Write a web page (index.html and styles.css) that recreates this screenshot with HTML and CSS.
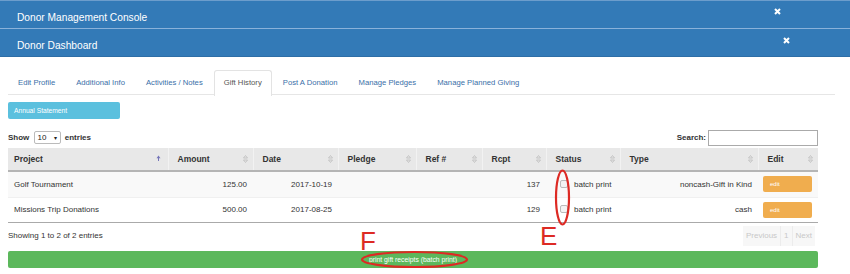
FILE: index.html
```
<!DOCTYPE html>
<html>
<head>
    <meta http-equiv="Content-Type" content="text/html; charset=utf-8">
    <title>Donor Dashboard</title>
    <link rel="stylesheet" href="styles.css">
</head>
<body>
<!-- 顶部标题栏 -->
<div class="bar bar-top">
    <span class="bar-title">Donor Management Console</span>
    <svg class="close" width="7" height="7" viewBox="0 0 7 7"><path d="M1 1L6 6M6 1L1 6" stroke="#fff" stroke-width="2"/></svg>
</div>
<div class="bar bar-sub">
    <span class="bar-title">Donor Dashboard</span>
    <svg class="close" width="7" height="7" viewBox="0 0 7 7"><path d="M1 1L6 6M6 1L1 6" stroke="#fff" stroke-width="2"/></svg>
</div>

<div class="content">
    <!-- tabs -->
    <ul class="tabs">
        <li>Edit Profile</li>
        <li>Additional Info</li>
        <li>Activities / Notes</li>
        <li class="active">Gift History</li>
        <li>Post A Donation</li>
        <li>Manage Pledges</li>
        <li>Manage Planned Giving</li>
    </ul>

    <div class="btn-info">Annual Statement</div>

    <div class="table-wrap">
        <div class="tools">
            <label class="len">Show <span class="select">10 <i>&#9662;</i></span> entries</label>
            <label class="search">Search: <span class="input"></span></label>
        </div>

        <table class="grid">
            <thead>
            <tr>
                <th class="c-project sorted">Project</th>
                <th class="c-amount">Amount</th>
                <th class="c-date">Date</th>
                <th class="c-pledge">Pledge</th>
                <th class="c-ref">Ref #</th>
                <th class="c-rcpt">Rcpt</th>
                <th class="c-status">Status</th>
                <th class="c-type">Type</th>
                <th class="c-edit">Edit</th>
            </tr>
            </thead>
            <tbody>
            <tr class="odd">
                <td>Golf Tournament</td>
                <td class="r">125.00</td>
                <td class="r">2017-10-19</td>
                <td></td>
                <td></td>
                <td class="r">137</td>
                <td><span class="chk"></span>batch print</td>
                <td class="r">noncash-Gift in Kind</td>
                <td><span class="btn-edit">edit</span></td>
            </tr>
            <tr>
                <td>Missions Trip Donations</td>
                <td class="r">500.00</td>
                <td class="r">2017-08-25</td>
                <td></td>
                <td></td>
                <td class="r">129</td>
                <td><span class="chk"></span>batch print</td>
                <td class="r">cash</td>
                <td><span class="btn-edit">edit</span></td>
            </tr>
            </tbody>
        </table>

        <div class="foot">
            <span>Showing 1 to 2 of 2 entries</span>
            <div class="pager">
                <span>Previous</span><span>1</span><span>Next</span>
            </div>
        </div>

        <div class="btn-print">print gift receipts (batch print)</div>
    </div>
</div>

<!-- 标注 E / F -->
<svg class="marks" width="850" height="274" viewBox="0 0 850 274">
    <ellipse cx="562.5" cy="197.5" rx="6.5" ry="27" fill="none" stroke="#dd2a24" stroke-width="2.2"/>
    <ellipse cx="414.5" cy="259.5" rx="52.5" ry="7.5" fill="none" stroke="#dd2a24" stroke-width="2.2"/>
    <text x="540" y="245" class="mark-letter">E</text>
    <text x="360" y="250" class="mark-letter">F</text>
</svg>
</body>
</html>
```

FILE: styles.css
```
body {
    margin: 0;
    font-family: "Liberation Sans", Arial, sans-serif;
    font-size: 8px;
    color: #333;
    background: #fff;
    position: relative;
    width: 850px;
    height: 274px;
    overflow: hidden;
}

/* 标题栏 */
.bar {
    display: flex;
    align-items: center;
    justify-content: space-between;
    height: 27px;
    padding-left: 17px;
    background: #337ab7;
    color: #fff;
    font-size: 10.2px;
}
.bar-top {
    border-top: 1px solid #6c9dcc;
    padding-right: 69px;
}
.bar-top .close {
    margin-top: -6px;
}
.bar-sub {
    border-top: 1px solid #8ab2da;
    border-bottom: 1px solid #2e6ea6;
    padding-right: 60px;
}
.bar-sub .close {
    margin-top: -5px;
}
.bar-title {
    margin-top: 5px;
}

.content {
    padding: 13px 15px 0 8px;
}

/* tabs */
.tabs {
    display: flex;
    margin: 0;
    padding: 0;
    list-style: none;
    border-bottom: 1px solid #e6e6e6;
    height: 24px;
    font-size: 7.7px;
}
.tabs li {
    padding: 0 9px;
    margin-right: 1px;
    line-height: 24px;
    color: #3a6fa8;
    border: 1px solid transparent;
    border-bottom: none;
    border-radius: 3px 3px 0 0;
}
.tabs li.active {
    color: #555;
    border-color: #e3e3e3;
    background: #fff;
    height: 25px;
}

.btn-info {
    width: 106px;
    height: 17px;
    line-height: 17px;
    padding-left: 6px;
    margin-top: 7px;
    background: #5bc0de;
    border-radius: 2px;
    color: #fff;
    font-size: 6.7px;
}

.table-wrap {
    width: 810px;
}

.tools {
    display: flex;
    justify-content: space-between;
    align-items: center;
    height: 17px;
    margin-top: 10px;
    font-weight: bold;
}
.select {
    display: inline-flex;
    align-items: center;
    justify-content: space-between;
    width: 19px;
    height: 11px;
    padding: 0 3px;
    margin: 0 2px;
    border: 1px solid #bbb;
    border-radius: 2px;
    font-weight: normal;
    color: #222;
}
.select i {
    font-style: normal;
    font-size: 6px;
}
.search {
    display: flex;
    align-items: center;
}
.input {
    display: inline-block;
    width: 108px;
    height: 14px;
    margin-left: 2px;
    border: 1px solid #aaa;
}

/* 表格 */
.grid {
    width: 810px;
    margin-top: 2px;
    border-collapse: collapse;
    table-layout: fixed;
}
.grid th {
    box-sizing: border-box;
    height: 23px;
    padding: 0 0 0 9px;
    text-align: left;
    font-size: 8.5px;
    background: #e8e8e8 url("data:image/svg+xml,%3Csvg xmlns='http://www.w3.org/2000/svg' width='5' height='8'%3E%3Cpath d='M2.5 0.5L4.5 3H0.5Z M2.5 7.5L4.5 5H0.5Z' fill='none' stroke='%23bdbdbd' stroke-width='0.8'/%3E%3C/svg%3E") no-repeat right 5px center;
    border-left: 1px solid #f2f2f2;
    border-bottom: 2px solid #b5b5b5;
}
.grid th:first-child {
    padding-left: 6px;
    border-left: none;
}
.grid th.sorted {
    background-image: url("data:image/svg+xml,%3Csvg xmlns='http://www.w3.org/2000/svg' width='5' height='8'%3E%3Cpath d='M2.5 0.5L4.5 3.2H0.5Z' fill='%237575b8'/%3E%3Cpath d='M2.5 3V6' stroke='%237575b8' stroke-width='1'/%3E%3C/svg%3E");
    background-position: right 7px center;
}
.c-project { width: 160px; }
.c-amount { width: 85px; }
.c-date { width: 85px; }
.c-pledge { width: 78px; }
.c-ref { width: 66px; }
.c-rcpt { width: 64px; }
.c-status { width: 74px; }
.c-type { width: 138px; }
.c-edit { width: 60px; }

.grid td {
    box-sizing: border-box;
    height: 25px;
    padding: 0 6px;
    border-top: 1px solid #f0f0f0;
    white-space: nowrap;
}
.grid td.r {
    text-align: right;
}
.grid tr.odd td {
    background: #f9f9f9;
    height: 26px;
}
.grid tbody tr:last-child td {
    border-bottom: 1px solid #aaa;
}
.chk {
    display: inline-block;
    width: 6px;
    height: 6px;
    margin: 0 6px 0 8px;
    border: 1px solid #bbb;
    border-radius: 2px;
    background: #f3f3f3;
    vertical-align: -1px;
}
.btn-edit {
    display: block;
    width: 42px;
    height: 16px;
    line-height: 16px;
    padding-left: 7px;
    margin-left: -1px;
    background: #f0ad4e;
    border-radius: 2px;
    color: #fff;
    font-size: 6px;
}

.foot {
    display: flex;
    justify-content: space-between;
    align-items: center;
    height: 20px;
    margin-top: 3px;
}
.pager {
    display: flex;
    height: 20px;
    background: #f7f7f7;
    color: #c8c8c8;
    margin-right: 3px;
}
.pager span {
    line-height: 20px;
    padding: 0 3px;
    border-left: 1px solid #ececec;
}
.pager span:first-child {
    border-left: none;
    padding-left: 3px;
}

.btn-print {
    height: 17px;
    line-height: 17px;
    margin-top: 5px;
    background: #5cb85c;
    border-radius: 2px;
    color: #fff;
    text-align: center;
    font-size: 6.8px;
}

/* 标注层 */
.marks {
    position: absolute;
    left: 0;
    top: 0;
    pointer-events: none;
}
.mark-letter {
    font-family: "Liberation Sans", Arial, sans-serif;
    font-size: 26px;
    fill: #dd2a24;
}
```
